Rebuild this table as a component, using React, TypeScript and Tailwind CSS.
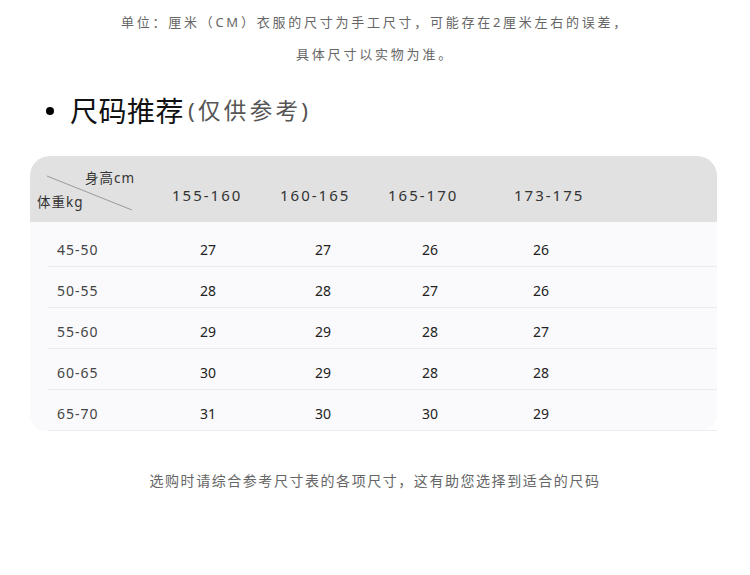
import React from "react";

const F = { fontFamily: '"Noto Sans", "Noto Sans CJK SC", sans-serif' };

const rows: [string, string, string, string, string][] = [
  ["45-50", "27", "27", "26", "26"],
  ["50-55", "28", "28", "27", "26"],
  ["55-60", "29", "29", "28", "27"],
  ["60-65", "30", "29", "28", "28"],
  ["65-70", "31", "30", "30", "29"],
];

export default function App() {
  return (
    <div className="w-[750px] h-[575px] bg-white overflow-hidden" style={F}>
      <div className="pt-[12px] flex flex-col items-center text-[13px] text-[#666] tracking-[2.75px]">
        <div className="h-[20px] leading-[20px]">单位：厘米（CM）衣服的尺寸为手工尺寸，可能存在2厘米左右的误差，</div>
        <div className="h-[20px] leading-[20px] mt-[12px] tracking-[2.8px]">具体尺寸以实物为准。</div>
      </div>

      <div className="mt-[27px] flex items-center h-[40px] pl-[46px]">
        <div className="w-[8px] h-[8px] rounded-full bg-black" />
        <div className="ml-[16px] text-[28px] leading-[40px] text-[#111] tracking-[0.5px]">尺码推荐</div>
        <div className="ml-[4px] text-[22.5px] leading-[40px] text-[#555] tracking-[3.3px]">(仅供参考)</div>
      </div>

      <div className="mt-[25px] ml-[30px] w-[687px]">
        <div className="h-[66px] bg-[#e1e1e1] rounded-t-[20px] flex items-start text-[15px] text-[#333] tracking-[2px]">
          <div className="relative w-[142px] h-full">
            <svg className="absolute left-0 top-0" width="142" height="66">
              <line x1="17" y1="20" x2="102" y2="54" stroke="#9a9a9a" strokeWidth="1" />
            </svg>
            <div className="absolute left-[55px] top-[13px] text-[13.5px] leading-[18px] tracking-[1px] text-[#333]">身高cm</div>
            <div className="absolute left-[7px] top-[37px] text-[13.5px] leading-[18px] tracking-[1px] text-[#333]">体重kg</div>
          </div>
          <div className="w-[108px] pt-[29px] leading-[20px]">155-160</div>
          <div className="w-[108px] pt-[29px] leading-[20px]">160-165</div>
          <div className="w-[126px] pt-[29px] leading-[20px]">165-170</div>
          <div className="pt-[29px] leading-[20px]">173-175</div>
        </div>
        <div className="bg-[#fafafc] rounded-b-[16px] pt-[4px]">
          {rows.map((r) => (
            <div key={r[0]} className="ml-[18px] h-[41px] border-b border-[#ececee] flex text-[14px] text-[#222]">
              <div className="w-[102px] pl-[9px] pt-[14px] leading-[20px] text-[#444] tracking-[1px]">{r[0]}</div>
              <div className="w-[116px] pt-[14px] leading-[20px] text-center">{r[1]}</div>
              <div className="w-[114px] pt-[14px] leading-[20px] text-center">{r[2]}</div>
              <div className="w-[100px] pt-[14px] leading-[20px] text-center">{r[3]}</div>
              <div className="w-[122px] pt-[14px] leading-[20px] text-center">{r[4]}</div>
            </div>
          ))}
        </div>
      </div>

      <div className="mt-[40px] flex justify-center text-[14px] leading-[20px] text-[#666] tracking-[1.55px]">
        选购时请综合参考尺寸表的各项尺寸，这有助您选择到适合的尺码
      </div>
    </div>
  );
}
